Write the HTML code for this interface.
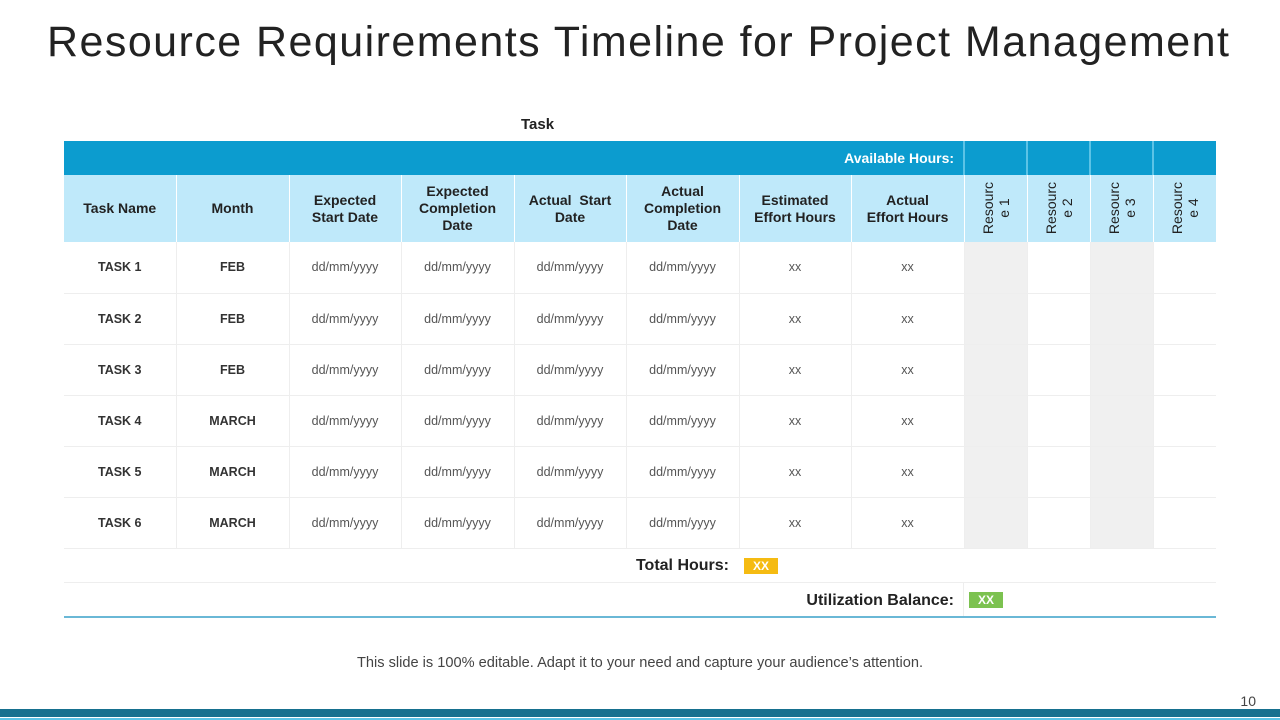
<!DOCTYPE html>
<html><head><meta charset="utf-8"><style>
*{margin:0;padding:0;box-sizing:border-box}
body{width:1280px;height:720px;background:#fff;position:relative;overflow:hidden;font-family:"Liberation Sans",Arial,sans-serif;color:#222}
h1{position:absolute;left:47px;top:18px;font-weight:normal;font-size:43px;color:#222;letter-spacing:1.45px}
.task{position:absolute;left:521px;top:116px;font-size:15px;font-weight:bold}
table{position:absolute;left:64px;top:141px;border-collapse:collapse;table-layout:fixed;width:1152px}
td{text-align:center;vertical-align:middle;font-size:13px;padding:0}
tr.top td{background:#0c9ccf;height:34px;color:#fff;font-weight:bold;font-size:14px}
tr.top td.r{border-left:2px solid #5cc3e6}
tr.hd td{background:#bfe9fa;height:67px;font-weight:bold;font-size:14px;color:#222;border-left:1px solid #fff;line-height:17px}
tr.hd td:first-child{border-left:none}
.rot{display:inline-block;transform:rotate(-90deg);font-weight:normal;font-size:14px;line-height:16px;white-space:nowrap}
tr.d td{height:51px;border-bottom:1px solid #eee;border-left:1px solid #eee;color:#555;font-size:12.5px}
tr.d td:first-child{border-left:none}
tr.d td.b{font-weight:bold;color:#333}
td.g{background:#f0f0f0}
.foot{position:absolute;left:64px;width:1152px;font-weight:bold;font-size:16px;color:#222}
.tag{display:inline-block;color:#fff;font-size:12px;font-weight:bold;padding:1px 9px}
</style></head><body>
<h1>Resource Requirements Timeline for Project Management</h1>
<div class="task">Task</div>
<table>
<colgroup><col width="112"><col width="113"><col width="112"><col width="113"><col width="112"><col width="113"><col width="112"><col width="113"><col width="63"><col width="63"><col width="63"><col width="63"></colgroup>
<tr class="top"><td colspan="8" style="text-align:right;padding-right:9px">Available Hours:</td><td class="r"></td><td class="r"></td><td class="r"></td><td class="r"></td></tr>
<tr class="hd"><td>Task Name</td><td>Month</td><td>Expected<br>Start Date</td><td>Expected<br>Completion<br>Date</td><td>Actual &nbsp;Start<br>Date</td><td>Actual<br>Completion<br>Date</td><td>Estimated<br>Effort Hours</td><td>Actual<br>Effort Hours</td>
<td><span class="rot">Resourc<br>e 1</span></td><td><span class="rot">Resourc<br>e 2</span></td><td><span class="rot">Resourc<br>e 3</span></td><td><span class="rot">Resourc<br>e 4</span></td></tr>
<tr class="d"><td class="b">TASK 1</td><td class="b">FEB</td><td>dd/mm/yyyy</td><td>dd/mm/yyyy</td><td>dd/mm/yyyy</td><td>dd/mm/yyyy</td><td>xx</td><td>xx</td><td class="g"></td><td></td><td class="g"></td><td></td></tr>
<tr class="d"><td class="b">TASK 2</td><td class="b">FEB</td><td>dd/mm/yyyy</td><td>dd/mm/yyyy</td><td>dd/mm/yyyy</td><td>dd/mm/yyyy</td><td>xx</td><td>xx</td><td class="g"></td><td></td><td class="g"></td><td></td></tr>
<tr class="d"><td class="b">TASK 3</td><td class="b">FEB</td><td>dd/mm/yyyy</td><td>dd/mm/yyyy</td><td>dd/mm/yyyy</td><td>dd/mm/yyyy</td><td>xx</td><td>xx</td><td class="g"></td><td></td><td class="g"></td><td></td></tr>
<tr class="d"><td class="b">TASK 4</td><td class="b">MARCH</td><td>dd/mm/yyyy</td><td>dd/mm/yyyy</td><td>dd/mm/yyyy</td><td>dd/mm/yyyy</td><td>xx</td><td>xx</td><td class="g"></td><td></td><td class="g"></td><td></td></tr>
<tr class="d"><td class="b">TASK 5</td><td class="b">MARCH</td><td>dd/mm/yyyy</td><td>dd/mm/yyyy</td><td>dd/mm/yyyy</td><td>dd/mm/yyyy</td><td>xx</td><td>xx</td><td class="g"></td><td></td><td class="g"></td><td></td></tr>
<tr class="d"><td class="b">TASK 6</td><td class="b">MARCH</td><td>dd/mm/yyyy</td><td>dd/mm/yyyy</td><td>dd/mm/yyyy</td><td>dd/mm/yyyy</td><td>xx</td><td>xx</td><td class="g"></td><td></td><td class="g"></td><td></td></tr>
</table>
<div class="foot" style="top:549px;height:34px;border-bottom:1px solid #eee">
  <span style="position:absolute;right:487px;top:8px">Total Hours:</span>
  <span class="tag" style="position:absolute;left:680px;top:9px;background:#f5bb12">XX</span>
</div>
<div class="foot" style="top:583px;height:35px;border-bottom:2px solid #6ab8d6">
  <span style="position:absolute;right:262px;top:9px">Utilization Balance:</span>
  <div style="position:absolute;left:899px;top:0;height:33px;border-left:1px solid #eee"></div>
  <span class="tag" style="position:absolute;left:905px;top:9px;background:#7cc250">XX</span>
</div>
<div style="position:absolute;left:0;width:1280px;top:655px;text-align:center;font-size:14.6px;color:#444">This slide is 100% editable. Adapt it to your need and capture your audience’s attention.</div>
<div style="position:absolute;right:24px;top:693px;font-size:14px;color:#444">10</div>
<div style="position:absolute;left:0;top:709px;width:1280px;height:8px;background:#16708f"></div>
<div style="position:absolute;left:0;top:718px;width:1280px;height:2px;background:#5cc3e6"></div>
</body></html>
